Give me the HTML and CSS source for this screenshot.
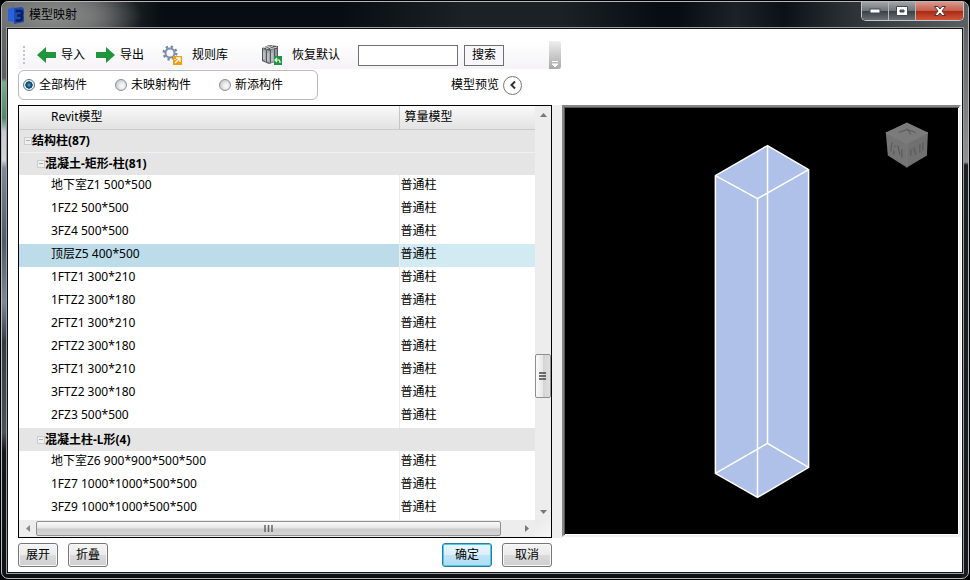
FILE: index.html
```html
<!DOCTYPE html>
<html lang="zh-CN">
<head>
<meta charset="utf-8">
<title>模型映射</title>
<link rel="stylesheet" href="styles.css">
</head>
<body>
<div class="window">
  <header class="titlebar">
    <svg class="app-icon" width="16" height="17" viewBox="0 0 16 17" aria-hidden="true">
      <path d="M0 2 6 0V15L0 14Z" fill="#2a62dc"/>
      <path d="M6 1 14 0 16 2V15L6 17Z" fill="#1c4cb4"/>
      <path d="M7.500 4H12.500Q14 4 14 6T12 8.500Q14 9 14 11T12 13.500H7.500M9 8.500H12" fill="none" stroke="#0a1f5c" stroke-width="2.600"/>
    </svg>
    <h1 class="title">模型映射</h1>
    <div class="controls">
      <button class="control" aria-label="最小化"><svg width="12" height="6" viewBox="0 0 12 6"><rect x="1" y="1" width="10" height="4" fill="#fff" stroke="#444b55"/></svg></button>
      <button class="control" aria-label="最大化"><svg width="12" height="10" viewBox="0 0 12 10"><path d="M.5.5H11.500V9.500H.5ZM4 4V6H8V4Z" fill="#fff" fill-rule="evenodd" stroke="#444b55"/></svg></button>
      <button class="control close" aria-label="关闭"><svg width="12" height="10" viewBox="0 0 12 10"><path d="M.5.5H4L6 3 8 .5H11.500L8 5 11.500 9.500H8L6 7 4 9.500H.5L4 5Z" fill="#fff" stroke="#5a3030"/></svg></button>
    </div>
  </header>

  <main class="client">
    <div class="toolbar">
      <span class="grip"></span>
      <button class="tool">
        <svg width="19" height="18" viewBox="0 0 19 18"><path d="M0 9 9 1V6H19V12H9V17Z" fill="#20963c"/></svg>导入
      </button>
      <button class="tool">
        <svg width="19" height="18" viewBox="0 0 19 18"><path d="M19 9 10 1V6H0V12H10V17Z" fill="#20963c"/></svg>导出
      </button>
      <button class="tool wide">
        <svg width="20" height="20" viewBox="0 0 20 20">
          <circle cx="8" cy="8" r="6" fill="none" stroke="#7688a3" stroke-width="3" stroke-dasharray="2.200 2.500"/>
          <circle cx="8" cy="8" r="4.500" fill="#f5f8fc" stroke="#7f90aa" stroke-width="2"/>
          <rect x="11" y="11" width="9" height="9" fill="#f39c12"/>
          <path d="M14 13H18V17M18 13 13 18M13 14V15" fill="none" stroke="#fff" stroke-width="1.300"/>
        </svg>规则库
      </button>
      <button class="tool wide restore">
        <svg width="20" height="20" viewBox="0 0 20 20">
          <path d="M0 3 7 0 16 1V16L7 19 0 16Z" fill="#53565a"/>
          <path d="M1 4 4 5V17L1 15ZM5 5 8 6V18L5 17ZM9 5 12 4V17L9 18Z" fill="#a4a7ab"/>
          <path d="M1 3 8 1M4 4 11 1M8 4 15 2M2 7V14M6 8V16M10 8V16M14 4V14" stroke="#d4d6d8" stroke-width="1"/>
          <rect x="12" y="11" width="8" height="9" fill="#20963c"/>
          <path d="M15 13 13 15 15 17M13 15H17Q18 15 18 18" fill="none" stroke="#fff" stroke-width="1.200"/>
        </svg>恢复默认
      </button>
      <div class="search">
        <input type="text" class="search-box" aria-label="搜索">
        <button class="search-button">搜索</button>
      </div>
      <button class="overflow" aria-label="更多">
        <svg width="8" height="8" viewBox="0 0 8 8"><path d="M1 1.500H7M1 4 4 7 7 4Z" fill="#fff" stroke="#fff"/></svg>
      </button>
    </div>

    <div class="filters">
      <fieldset class="scope">
        <label><input type="radio" name="scope" checked>全部构件</label>
        <label><input type="radio" name="scope">未映射构件</label>
        <label><input type="radio" name="scope">新添构件</label>
      </fieldset>
      <div class="preview-toggle">
        <label for="preview">模型预览</label>
        <button id="preview" class="round" aria-label="模型预览"><svg width="6" height="8" viewBox="0 0 6 8"><path d="M5 .5 1.500 4 5 7.500" fill="none" stroke="#333" stroke-width="2"/></svg></button>
      </div>
    </div>

    <div class="workspace">
      <section class="list">
        <table class="tree">
          <colgroup><col class="col-revit"><col></colgroup>
          <thead><tr><th>Revit模型</th><th>算量模型</th></tr></thead>
          <tbody>
            <tr class="group"><th colspan="2"><span class="minus"></span>结构柱(87)</th></tr>
            <tr class="group nested"><th colspan="2"><span class="minus"></span>混凝土-矩形-柱(81)</th></tr>
            <tr><td>地下室Z1 500*500</td><td>普通柱</td></tr>
            <tr><td>1FZ2 500*500</td><td>普通柱</td></tr>
            <tr><td>3FZ4 500*500</td><td>普通柱</td></tr>
            <tr class="selected"><td>顶层Z5 400*500</td><td>普通柱</td></tr>
            <tr><td>1FTZ1 300*210</td><td>普通柱</td></tr>
            <tr><td>1FTZ2 300*180</td><td>普通柱</td></tr>
            <tr><td>2FTZ1 300*210</td><td>普通柱</td></tr>
            <tr><td>2FTZ2 300*180</td><td>普通柱</td></tr>
            <tr><td>3FTZ1 300*210</td><td>普通柱</td></tr>
            <tr><td>3FTZ2 300*180</td><td>普通柱</td></tr>
            <tr><td>2FZ3 500*500</td><td>普通柱</td></tr>
            <tr class="group nested"><th colspan="2"><span class="minus"></span>混凝土柱-L形(4)</th></tr>
            <tr><td>地下室Z6 900*900*500*500</td><td>普通柱</td></tr>
            <tr><td>1FZ7 1000*1000*500*500</td><td>普通柱</td></tr>
            <tr><td>3FZ9 1000*1000*500*500</td><td>普通柱</td></tr>
          </tbody>
        </table>
        <div class="scroll vertical">
          <span class="arrow"><svg width="7" height="4" viewBox="0 0 7 4"><path d="M0 4 3.500 0 7 4Z" fill="#777"/></svg></span>
          <span class="before"></span>
          <span class="thumb"><svg width="8" height="8" viewBox="0 0 8 8"><path d="M0 1H7M0 4H7M0 7H7" stroke="#444" stroke-width="1.500"/></svg></span>
          <span class="after"></span>
          <span class="arrow"><svg width="7" height="4" viewBox="0 0 7 4"><path d="M0 0H7L3.500 4Z" fill="#777"/></svg></span>
        </div>
        <div class="scroll horizontal">
          <span class="arrow"><svg width="4" height="7" viewBox="0 0 4 7"><path d="M4 0V7L0 3.500Z" fill="#888"/></svg></span>
          <span class="thumb"><svg width="9" height="7" viewBox="0 0 9 7"><path d="M1 0V7M4.500 0V7M8 0V7" stroke="#666" stroke-width="1.500"/></svg></span>
          <span class="rest"></span>
          <span class="arrow"><svg width="4" height="7" viewBox="0 0 4 7"><path d="M0 0V7L4 3.500Z" fill="#777"/></svg></span>
        </div>
        <div class="corner"></div>
      </section>
      <div class="splitter"></div>
      <section class="viewport">
        <svg class="scene" viewBox="0 0 393 425" role="img" aria-label="模型预览">
          <path d="M202 37 243 61V358L192 388 150 364V67Z" fill="#afc1e8"/>
          <path d="M202 37 243 61 192 90 150 67ZM202 334 243 358 192 388 150 364ZM202 37V334M243 61V358M192 90V388M150 67V364" fill="none" stroke="#fff" stroke-width="1.500" stroke-linejoin="round"/>
          <path d="M341 14 362 24 341 35 320 24Z" fill="#7b7b7b"/>
          <path d="M320 24 341 35V59L322 47Z" fill="#747474"/>
          <path d="M362 24 341 35V59L361 47Z" fill="#707070"/>
          <path d="M320 24 341 35 362 24M341 35V59" fill="none" stroke="#808080"/>
          <path d="M333 24 341 21 350 24M341 20 345 26" fill="none" stroke="#5a5a5a"/>
          <path d="M326 34 325 43M329 37V39M328 42V46M332 37 334 46M336 41V49M345 41V47M348 39 350 46M354 36V44M357 34V42" stroke="#555"/>
        </svg>
      </section>
    </div>

    <footer class="footer">
      <button class="push">展开</button>
      <button class="push">折叠</button>
      <button class="push dialog default">确定</button>
      <button class="push dialog">取消</button>
    </footer>
  </main>
</div>
</body>
</html>
```

FILE: styles.css
```css
* { box-sizing: border-box; }

body {
  margin: 0;
  min-height: 100vh;
  display: flex;
  padding: 1px;
  background: #000;
  color: #000;
  font: 12px/18px "Noto Sans", "Noto Sans CJK SC", sans-serif;
}

button, input {
  font: inherit;
  color: inherit;
  margin: 0;
}

button {
  display: flex;
  align-items: center;
  justify-content: center;
  padding: 0;
  border: 0;
  background: none;
  white-space: nowrap;
}

svg { display: block; flex: none; }

.window {
  flex: 1;
  display: flex;
  flex-direction: column;
  padding: 0 5px 5px;
  border: 1px solid #b5b8ba;
  border-radius: 7px;
  background:
    linear-gradient(#6b6d6d 0, #5d6060 76px, #79ad8c 80px, #4e8a68 116px, #c8cdd4 130px, #d2d5da 158px, #7e8b99 166px, #4e5b68 240px, #7e8995 300px, #333b43 340px, #4a525a 430px, #14181c 450px, #101316) left / 6px 100% no-repeat,
    linear-gradient(#555a5e 0, #6c7072 60px, #909292 160px, #1b2225 163px, #15191c) right / 6px 100% no-repeat,
    #0d1115;
}

/* Title bar */
.titlebar {
  display: flex;
  align-items: center;
  height: 26px;
  margin: 0 -5px;
  padding-left: 6px;
  border-radius: 6px 6px 0 0;
  background:
    radial-gradient(ellipse 90px 36px at 50px 14px, #8d8f8f 0, #767878 45%, transparent 100%),
    linear-gradient(90deg, #5d6060 0, #4d5052 80px, #22272a 120px, #080d13 160px, #080d13 35%, #1c2125 48%, #1c2125 58%, #080d14 68%, #080d14 70%, #1c2228 76%, #0c1118 81%, #292e32 87%, #5b6062 100%);
}

.title {
  margin: 0 0 0 5px;
  font-size: 12px;
  font-weight: normal;
}

.controls {
  display: flex;
  align-self: flex-start;
  margin: 0 4px 0 auto;
  border: 1px solid #c4c7c9;
  border-top: 0;
  border-radius: 0 0 5px 5px;
  overflow: hidden;
}

.control {
  width: 27px;
  height: 18px;
  border-right: 1px solid #b5b8ba;
  background: linear-gradient(#a0a4a6, #70757a 48%, #3b4146 52%, #697075);
}

.control.close {
  width: 47px;
  border-right: 0;
  background: linear-gradient(#d9988c, #c5604e 48%, #a82a14 52%, #d2553a);
}

/* Client area */
.client {
  flex: 1;
  display: flex;
  flex-direction: column;
  padding: 12px 1px 5px 10px;
  border: 1px solid #111;
  background: #fff;
  box-shadow: 0 0 0 1px #9a9d9f;
}

.toolbar {
  display: flex;
  align-items: center;
  width: 543px;
  height: 28px;
  padding-left: 5px;
  background: linear-gradient(#fff, #f5f3f6);
}

.grip {
  width: 2px;
  height: 18px;
  margin-right: 12px;
  background: repeating-linear-gradient(#c4c4c4 0 2px, transparent 2px 4px);
}

.tool { gap: 5px; margin-right: 11px; }
.tool.wide { gap: 10px; margin-left: 7px; }
.tool.restore { margin-left: 23px; }

.search { display: flex; gap: 6px; margin-left: 7px; }

.search-box {
  width: 100px;
  height: 21px;
  border: 1px solid #707070;
  background: #fff;
}

.search-button {
  width: 40px;
  height: 21px;
  border: 1px solid #707070;
  background: #f8f7fa;
}

.overflow {
  align-self: stretch;
  align-items: flex-end;
  width: 12px;
  margin-left: auto;
  padding-bottom: 1px;
  border-radius: 0 3px 3px 0;
  background: linear-gradient(#eee, #a9a9a9);
}

.filters {
  display: flex;
  justify-content: space-between;
  align-items: center;
  width: 504px;
  margin: 1px 0 5px;
}

.scope {
  display: flex;
  align-items: center;
  gap: 28px;
  width: 300px;
  height: 30px;
  margin: 0;
  padding: 0 4px;
  border: 1px solid #b9b9b9;
  border-radius: 6px;
}

.scope label { display: flex; align-items: center; gap: 4px; white-space: nowrap; }

.scope input {
  appearance: none;
  width: 12px;
  height: 12px;
  border: 1px solid #8e8f8f;
  border-radius: 50%;
  background: radial-gradient(circle at 60% 60%, #f4f4f4 20%, #c4c8cc 80%);
}

.scope input:checked {
  border-color: #57778c;
  background: radial-gradient(circle, #4ab0d8 0, #15506f 35%, #173f57 48%, #e8f0f4 55%);
}

.preview-toggle { display: flex; align-items: center; gap: 4px; }

.round {
  width: 19px;
  height: 19px;
  border: 1px solid #777;
  border-radius: 50%;
}

/* List and preview */
.workspace { flex: 1; display: flex; }

.list {
  display: grid;
  grid-template: 1fr 17px / 1fr 16px;
  width: 534px;
  border: 1px solid #000;
}

.tree {
  width: 100%;
  align-self: start;
  table-layout: fixed;
  border-collapse: collapse;
}

.col-revit { width: 380px; }

.tree th, .tree td {
  height: 23px;
  padding: 0 0 0 32px;
  line-height: 18px;
  text-align: left;
  vertical-align: middle;
}

.tree td { padding-bottom: 4px; }
.tree td + td { padding-left: 1px; border-left: 1px solid #ededed; }

.tree thead th {
  border-bottom: 1px solid #ccc;
  background: linear-gradient(#f9f9f9, #e2e2e2);
  font-weight: normal;
}

.tree thead th + th { padding-left: 5px; border-left: 1px solid #c5c5c5; }

.tree .group th {
  padding-left: 5px;
  border-bottom: 1px solid #f0f0f0;
  background: #e5e5e5;
  font-weight: bold;
}

.tree .nested th { padding-left: 18px; border-bottom: 0; }

.minus {
  display: inline-block;
  width: 8px;
  height: 8px;
  border: 1px solid #c9cdd2;
  background: linear-gradient(#a9adb2, #a9adb2) center / 4px 1px no-repeat #f0f0f0;
}

.tree .selected td { background: #bbdce8; }
.tree .selected td + td { background: #d2eaf1; }

.scroll { display: flex; background: #ededed; }
.scroll.vertical { flex-direction: column; }
.arrow { display: flex; align-items: center; justify-content: center; flex: 0 0 17px; }
.before { flex: 231; }
.after { flex: 105; }

.thumb {
  display: flex;
  align-items: center;
  justify-content: center;
  border: 1px solid #8f8f8f;
  border-radius: 2px;
}

.vertical .thumb {
  flex: 0 0 44px;
  background: linear-gradient(90deg, #fafafa, #e8e8e8 48%, #d4d4d4 52%, #e0e0e0);
}

.horizontal .thumb {
  flex: 1;
  margin: 1px 0;
  background: linear-gradient(#fafafa, #e4e4e4 48%, #cbcbcb 52%, #d6d6d6);
}

.rest { flex: 0 0 17px; }
.corner { background: linear-gradient(135deg, #e9e9e9, #f7f7f7); }

.splitter { width: 10px; background: #efefef; }

.viewport {
  flex: 1;
  min-width: 0;
  display: flex;
  margin-bottom: 1px;
  border: 2px solid;
  border-color: #868686 #f0f0f0 #f0f0f0 #868686;
  background: #000;
  box-shadow: inset 1px 1px #555, inset -1px -1px #fff;
}

.scene { flex: 1; min-width: 0; margin: 1px 0 0 1px; }

/* Dialog buttons */
.footer { display: flex; gap: 10px; width: 534px; margin-top: 5px; }

.push {
  width: 40px;
  height: 24px;
  border: 1px solid #777;
  border-radius: 3px;
  background: linear-gradient(#f4f4f4, #ebebeb 48%, #dadada 52%, #cfcfcf);
  box-shadow: inset 0 0 0 1px #f8f8f8;
}

.push.dialog { width: 50px; }

.push.default {
  margin-left: auto;
  border-color: #2c7c9c;
  background: linear-gradient(#eaf5fb, #dcf0fa 48%, #c0e4f6 52%, #b0dcf2);
  box-shadow: inset 0 0 0 1px #45cdea;
}
```
